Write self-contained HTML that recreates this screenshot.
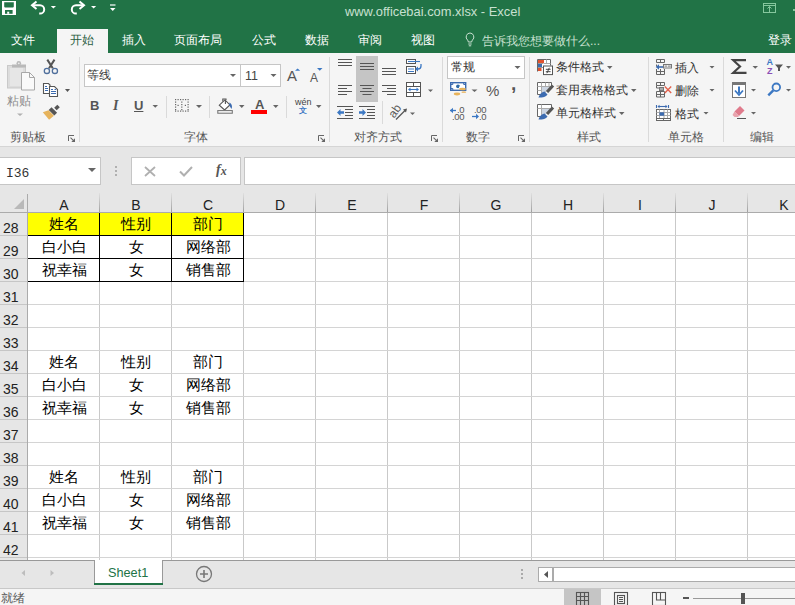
<!DOCTYPE html>
<html><head><meta charset="utf-8">
<style>
*{box-sizing:border-box;margin:0;padding:0}
html,body{width:795px;height:605px;overflow:hidden;background:#fff;font-family:"Liberation Sans",sans-serif;color:#444}
.a{position:absolute}
#title{left:0;top:0;width:795px;height:53px;background:#217346}
.tab{position:absolute;top:33px;font-size:12px;color:#fff;line-height:14px;white-space:nowrap;font-weight:300}
#ribbon{left:0;top:53px;width:795px;height:94px;background:#f5f5f5;border-bottom:1px solid #d5d5d5}
.sep{position:absolute;width:1px;background:#dadada}
.lbl{position:absolute;top:131px;font-size:12px;color:#555;line-height:13px;white-space:nowrap;font-weight:300}
.txt{position:absolute;font-size:13px;color:#333;line-height:14px;white-space:nowrap;font-weight:300}
.dd{position:absolute;width:0;height:0;border-left:3px solid transparent;border-right:3px solid transparent;border-top:3px solid #666}
#fbar{left:0;top:147px;width:795px;height:47px;background:#e6e6e6}
.box{position:absolute;background:#fff;border:1px solid #c6c6c6}
#grid{left:0;top:194px;width:795px;height:366px;background:#fff;overflow:hidden}
.colh{position:absolute;top:196px;height:18px;font-size:14px;color:#222;text-align:center;line-height:19px}
.rowh{position:absolute;left:0;width:28px;background:#e6e6e6;border-right:1px solid #9e9e9e;border-bottom:1px solid #c6c6c6;font-size:14px;color:#222;text-align:left;padding-left:5px}
.hl{position:absolute;left:28px;width:767px;height:1px;background:#d4d4d4}
.vl{position:absolute;top:18px;width:1px;height:350px;background:#d4d4d4}
.rown{position:absolute;left:3px;width:24px;height:23px;font-size:14px;color:#222;line-height:14px;padding-top:9px}
.cell{position:absolute;width:72px;text-align:center;font-size:15px;color:#000;line-height:16px;font-weight:300}
#tabs{left:0;top:560px;width:795px;height:28px;background:#e6e6e6;border-top:1px solid #999}
#status{left:0;top:588px;width:795px;height:17px;background:#f5f5f5}
</style></head><body>

<!-- TITLE BAR -->
<div id="title" class="a"></div>
<!-- save icon -->
<svg class="a" style="left:0;top:0" width="130" height="20" viewBox="0 0 130 20">
 <rect x="2" y="1" width="14" height="14" fill="#fff"/>
 <path d="M4.2 2.3h9.6v4.2a1 1 0 0 1-1 1h-7.6a1 1 0 0 1-1-1z" fill="#217346"/>
 <rect x="5" y="10" width="7.6" height="3.8" fill="#217346"/>
 <rect x="7.2" y="11.7" width="2" height="2.1" fill="#fff"/>
 <path d="M36.5 1.5L32 5.2l4.5 3.7" fill="none" stroke="#fff" stroke-width="2"/>
 <path d="M32.5 5.2H40a4.2 4.2 0 0 1 0 8.4h-0.8" fill="none" stroke="#fff" stroke-width="2"/>
 <path d="M50.8 6h5.2l-2.6 2.4z" fill="#fff"/>
 <path d="M79.5 1.5L84 5.2l-4.5 3.7" fill="none" stroke="#fff" stroke-width="2"/>
 <path d="M83.5 5.2H76a4.2 4.2 0 0 0 0 8.4h0.8" fill="none" stroke="#fff" stroke-width="2"/>
 <path d="M91 6h5.2l-2.6 2.4z" fill="#fff"/>
 <path d="M110 5h5.5" stroke="#fff" stroke-width="1.2"/>
 <path d="M110 8h5.5l-2.75 3z" fill="#fff"/>
</svg>
<div class="txt" style="left:345px;top:5px;font-size:12.9px;color:#c8e0d0;font-weight:normal">www.officebai.com.xlsx - Excel</div>
<svg class="a" style="left:755px;top:0" width="40" height="20" viewBox="755 0 40 20"><rect x="763.5" y="3.5" width="12" height="9" fill="none" stroke="#86c79e"/><path d="M764 5.5h11" stroke="#86c79e"/><path d="M769.5 6.5v6M767.5 8.5l2-2 2 2" fill="none" stroke="#86c79e"/><rect x="793" y="9" width="2" height="2" fill="#86c79e"/></svg>

<!-- TABS -->
<div class="a" style="left:57px;top:29px;width:51px;height:24px;background:#f5f5f5"></div>
<div class="tab" style="left:11px">文件</div>
<div class="tab" style="left:70px;color:#2b5e42">开始</div>
<div class="tab" style="left:122px">插入</div>
<div class="tab" style="left:174px">页面布局</div>
<div class="tab" style="left:252px">公式</div>
<div class="tab" style="left:305px">数据</div>
<div class="tab" style="left:358px">审阅</div>
<div class="tab" style="left:411px">视图</div>
<svg class="a" style="left:465px;top:32px" width="10" height="15" viewBox="0 0 10 15"><path d="M5 1a4 4 0 0 0-2.5 7c.5.6.8 1.2.8 2h3.4c0-.8.3-1.4.8-2A4 4 0 0 0 5 1z" fill="none" stroke="#c8e0d0" stroke-width="1"/><path d="M3.3 12h3.4M3.8 13.8h2.4" stroke="#c8e0d0"/></svg>
<div class="tab" style="left:482px;top:34px;font-size:12px;color:#c8e0d0">告诉我您想要做什么...</div>
<div class="tab" style="left:768px;font-weight:normal">登录</div>

<!-- RIBBON -->
<div id="ribbon" class="a"></div>
<div class="sep" style="left:79px;top:57px;height:85px"></div>
<div class="sep" style="left:329px;top:57px;height:85px"></div>
<div class="sep" style="left:442px;top:57px;height:85px"></div>
<div class="sep" style="left:529px;top:57px;height:85px"></div>
<div class="sep" style="left:648px;top:57px;height:85px"></div>
<div class="sep" style="left:723px;top:57px;height:85px"></div>

<!-- CLIPBOARD -->
<svg class="a" style="left:0;top:0" width="795" height="150" viewBox="0 0 795 150">
 <!-- paste -->
 <rect x="7.5" y="65.5" width="18" height="22.5" fill="#dcdcdc" stroke="#c9c9c9"/>
 <rect x="10" y="68" width="13" height="18" fill="#e6e6e6"/>
 <path d="M12 64.5h14v3h-14z" fill="#b9b9b9"/>
 <circle cx="18.8" cy="63.3" r="2.3" fill="#b9b9b9"/>
 <circle cx="18.8" cy="63.3" r="0.9" fill="#eee"/>
 <path d="M21.5 72.5h8l5 5v12.5h-13z" fill="#fafafa" stroke="#a8a8a8" stroke-width="1"/>
 <path d="M29.5 72.5v5h5" fill="none" stroke="#a8a8a8" stroke-width="1"/>
 <path d="M17 113.5h6l-3 2.5z" fill="#b0b0b0"/>
 <!-- cut -->
 <path d="M47.3 59.6L52.8 68.3M54.5 59.6L49 68.3" stroke="#555" stroke-width="2"/>
 <circle cx="46.9" cy="70.9" r="2.6" fill="none" stroke="#4f6f9c" stroke-width="1.3"/>
 <circle cx="54.9" cy="70.9" r="2.6" fill="none" stroke="#4f6f9c" stroke-width="1.3"/>
 <!-- copy -->
 <path d="M43.5 83.5h5l1.5 1.5v8.5h-6.5z" fill="#fff" stroke="#555" stroke-width="1.1"/>
 <path d="M45 86.5h2M45 88.5h3M45 90.5h3" stroke="#3c6bb0" stroke-width="1"/>
 <path d="M49.5 86.5h5l3 3v7h-8z" fill="#fff" stroke="#555" stroke-width="1.1"/>
 <path d="M51 89.5h2M54.5 89.5h1.5M51 91.5h5M51 93.5h5" stroke="#3c6bb0" stroke-width="1"/>
 <path d="M65 89h5l-2.5 3z" fill="#555"/>
 <!-- format painter -->
 <path d="M59.8 107.2L57.3 104.7 54.2 107.8 56.7 110.3z" fill="#555"/>
 <path d="M57.1 112.8L54.3 115.6 48.7 110 51.5 107.2z" fill="#555"/>
 <path d="M48.5 110.3L53.9 115.7 49.1 119.8 42.8 112.3z" fill="#e6b35c"/>
 <!-- launchers -->
 <path d="M68.5 141V135.5H74" fill="none" stroke="#666" stroke-width="1"/><path d="M70.5 137.7L73.5 140.7" stroke="#666" stroke-width="1.1"/><path d="M75 138.3V142H71.3z" fill="#666"/>
 <path d="M318.5 141V135.5H324" fill="none" stroke="#666" stroke-width="1"/><path d="M320.5 137.7L323.5 140.7" stroke="#666" stroke-width="1.1"/><path d="M325 138.3V142H321.3z" fill="#666"/>
 <path d="M431.5 141V135.5H437" fill="none" stroke="#666" stroke-width="1"/><path d="M433.5 137.7L436.5 140.7" stroke="#666" stroke-width="1.1"/><path d="M438 138.3V142H434.3z" fill="#666"/>
 <path d="M518.5 141V135.5H524" fill="none" stroke="#666" stroke-width="1"/><path d="M520.5 137.7L523.5 140.7" stroke="#666" stroke-width="1.1"/><path d="M525 138.3V142H521.3z" fill="#666"/>
</svg>
<div class="txt" style="left:7px;top:94px;font-size:12px;color:#8c8c8c;font-weight:normal">粘贴</div>
<div class="lbl" style="left:10px">剪贴板</div>
<!-- FONT GROUP -->
<div class="box" style="left:84px;top:64px;width:157px;height:23px;border-color:#c6c6c6"></div>
<div class="box" style="left:240px;top:64px;width:41px;height:23px;border-color:#c6c6c6"></div>
<div class="txt" style="left:87px;top:68px;font-size:12px;color:#333">等线</div>
<div class="txt" style="left:245px;top:69px;font-size:12.5px;color:#444">11</div>
<svg class="a" style="left:0;top:0" width="795" height="150" viewBox="0 0 795 150">
 <path d="M230 74h6l-3 3z" fill="#666"/>
 <path d="M270.5 74h6l-3 3z" fill="#666"/>
 <path d="M295 70.8h5.2l-2.6-2.4z" fill="#3c78c3"/>
 <path d="M317 68h5.5l-2.75 2.7z" fill="#3c78c3"/>
 <path d="M152.5 105h5.5l-2.75 2.8z" fill="#666"/>
 <!-- borders -->
 <g fill="#666">
  <rect x="175" y="99" width="1.2" height="1.2"/><rect x="177.5" y="99" width="1.2" height="1.2"/><rect x="180" y="99" width="1.2" height="1.2"/><rect x="182.5" y="99" width="1.2" height="1.2"/><rect x="185" y="99" width="1.2" height="1.2"/><rect x="187.5" y="99" width="1.2" height="1.2"/>
  <rect x="175" y="110.5" width="1.2" height="1.2"/><rect x="177.5" y="110.5" width="1.2" height="1.2"/><rect x="180" y="110.5" width="1.2" height="1.2"/><rect x="182.5" y="110.5" width="1.2" height="1.2"/><rect x="185" y="110.5" width="1.2" height="1.2"/><rect x="187.5" y="110.5" width="1.2" height="1.2"/>
  <rect x="175" y="101.5" width="1.2" height="1.2"/><rect x="175" y="104" width="1.2" height="1.2"/><rect x="175" y="106.5" width="1.2" height="1.2"/><rect x="175" y="109" width="1.2" height="1.2"/>
  <rect x="187.5" y="101.5" width="1.2" height="1.2"/><rect x="187.5" y="104" width="1.2" height="1.2"/><rect x="187.5" y="106.5" width="1.2" height="1.2"/><rect x="187.5" y="109" width="1.2" height="1.2"/>
  <rect x="181.2" y="101.5" width="1.2" height="1.2"/><rect x="181.2" y="104" width="1.2" height="1.2"/><rect x="181.2" y="106.5" width="1.2" height="1.2"/><rect x="181.2" y="109" width="1.2" height="1.2"/>
  <rect x="177.5" y="104.8" width="1.2" height="1.2"/><rect x="184.8" y="104.8" width="1.2" height="1.2"/>
 </g>
 <path d="M196 105h6l-3 3z" fill="#666"/>
 <!-- fill color -->
 <path d="M224.9 99.9L229.9 104.9 224.6 110 219.3 105.2z" fill="#fff" stroke="#555" stroke-width="1.1"/>
 <path d="M222.8 101.5v-2.5h3.2v1" fill="none" stroke="#555" stroke-width="1.1"/>
 <path d="M225.4 100.5v3.5" stroke="#555" stroke-width="1.1"/>
 <path d="M229.5 102.5c1.5 0.5 2.5 2.5 2.5 4.5l-0.5 2c-1-1.2-1.7-2.5-2.3-4z" fill="#3c6bb0"/>
 <rect x="217.8" y="110.6" width="14.5" height="2.6" fill="#fff" stroke="#777" stroke-width="1.1"/>
 <path d="M239 105h5.5l-2.75 3z" fill="#666"/>
 <!-- font color -->
 <rect x="251" y="110" width="16" height="4" fill="#f00"/>
 <path d="M273 105h5.5l-2.75 3z" fill="#666"/>
 <!-- wen -->
 <path d="M316 105h5.5l-2.75 3z" fill="#666"/>
</svg>
<div class="a" style="left:90px;top:99px;font-size:13px;font-weight:bold;color:#555;line-height:13px">B</div>
<div class="a" style="left:113px;top:99px;font-family:'Liberation Serif',serif;font-size:14px;font-style:italic;font-weight:bold;color:#555;line-height:13px">I</div>
<div class="a" style="left:134px;top:99px;font-size:13px;font-weight:bold;color:#555;line-height:13px;text-decoration:underline;text-underline-offset:1px">U</div>
<div class="a" style="left:287px;top:69px;font-size:15px;color:#555;line-height:14px">A</div>
<div class="a" style="left:310px;top:72px;font-size:12px;color:#555;line-height:12px">A</div>
<div class="a" style="left:255px;top:98px;font-size:13px;font-weight:bold;color:#555;line-height:14px">A</div>
<div class="a" style="left:295px;top:97.5px;font-size:9px;color:#444;line-height:9px">wén</div>
<div class="a" style="left:298.5px;top:105.5px;font-size:8px;color:#3c78c3;line-height:9px;font-weight:bold">文</div>
<div class="sep" style="left:166px;top:96px;height:22px"></div>
<div class="sep" style="left:209px;top:96px;height:22px"></div>
<div class="sep" style="left:286px;top:96px;height:22px"></div>
<div class="lbl" style="left:184px">字体</div>
<!-- ALIGNMENT -->
<div class="a" style="left:356px;top:56px;width:22px;height:46px;background:#c5c5c5"></div>
<svg class="a" style="left:0;top:0" width="795" height="150" viewBox="0 0 795 150">
 <g stroke="#555" stroke-width="1.1">
  <path d="M338 59.5h14M338 62.5h14M338 65.5h14"/>
  <path d="M360 63.5h14M360 66.5h14M360 69.5h14"/>
  <path d="M382 68.5h14M382 71.5h14M382 74.5h14"/>
  <path d="M338 85.5h14M338 88.5h9M338 91.5h14M338 94.5h9"/>
  <path d="M360 85.5h14M362.5 88.5h9M360 91.5h14M362.5 94.5h9"/>
  <path d="M382 85.5h14M387 88.5h9M382 91.5h14M387 94.5h9"/>
  <path d="M337 106.5h16M345 109.5h8M345 112.5h8M345 115.5h8M337 118.5h16"/>
  <path d="M359 106.5h16M367 109.5h8M367 112.5h8M367 115.5h8M359 118.5h16"/>
 </g>
 <path d="M337 112.5l3.5-3.5v2.3h3.5v2.4h-3.5v2.3z" fill="#3c78c3"/>
 <path d="M366 112.5l-3.5-3.5v2.3h-3.5v2.4h3.5v2.3z" fill="#3c78c3"/>
 <!-- wrap -->
 <rect x="406.5" y="59.5" width="9" height="4" fill="#fff" stroke="#555"/>
 <path d="M408 61.5h12" stroke="#3c78c3" stroke-width="1.1"/>
 <rect x="406.5" y="66.5" width="9" height="7" fill="#fff" stroke="#555"/>
 <path d="M408 69h6M408 71.5h6" stroke="#3c78c3" stroke-width="1.1"/>
 <path d="M421 64v2a3 3 0 0 1-3 3h-2" fill="none" stroke="#3c78c3" stroke-width="1.3"/>
 <path d="M415 69l3-2.5v5z" fill="#3c78c3"/>
 <!-- merge -->
 <rect x="406.5" y="82.5" width="14" height="14" fill="#fff" stroke="#555"/>
 <path d="M406.5 86.5h14M406.5 92.5h14M413.5 82.5v4M413.5 92.5v4" stroke="#555"/>
 <path d="M409 89.5h9" stroke="#3c78c3" stroke-width="1.1"/>
 <path d="M408 89.5l2.5-2v4zM419 89.5l-2.5-2v4z" fill="#3c78c3"/>
 <path d="M428 89.5h5l-2.5 2.5z" fill="#666"/>
 <!-- orientation -->
 <path d="M396 119.5L406 109.5" stroke="#555" stroke-width="1.2"/>
 <path d="M407 108.5l-1 4-3-3z" fill="#555"/>
 <path d="M410 112.5h5l-2.5 2.5z" fill="#666"/>
</svg>
<div class="a" style="left:388px;top:105px;font-size:12px;color:#555;line-height:12px;transform:rotate(-55deg);transform-origin:center">ab</div>
<div class="sep" style="left:382px;top:101px;height:23px"></div>
<div class="lbl" style="left:354px">对齐方式</div>
<!-- NUMBER -->
<div class="box" style="left:447px;top:56px;width:78px;height:23px"></div>
<div class="txt" style="left:451px;top:60px;font-size:12px;color:#333">常规</div>
<svg class="a" style="left:0;top:0" width="795" height="150" viewBox="0 0 795 150">
 <path d="M514.5 66h6l-3 3z" fill="#666"/>
 <rect x="450.7" y="82.7" width="15" height="7.6" fill="#fff" stroke="#3c6bb0" stroke-width="1.4"/>
 <path d="M451 84.5h1.8v-1.8M465.5 84.5h-1.8v-1.8M451 88.5h1.8v1.8" fill="none" stroke="#3c6bb0" stroke-width="1"/>
 <circle cx="458" cy="86.3" r="1.9" fill="#2f6aa6"/>
 <rect x="459" y="86.5" width="1.5" height="1.5" fill="#fff"/>
 <ellipse cx="462.5" cy="89" rx="3.4" ry="1.3" fill="#e8b35a"/>
 <ellipse cx="463.8" cy="92.2" rx="2.4" ry="0.9" fill="#ebc07a"/>
 <ellipse cx="457" cy="94" rx="3.2" ry="1.4" fill="#e8b35a"/>
 <path d="M471.5 89.5h6l-3 2.5z" fill="#666"/>
 <path d="M450 110.5h6" stroke="#3c78c3" stroke-width="1.3"/><path d="M450 110.5l3-2.8v5.6z" fill="#3c78c3"/>
 <path d="M472 116.5h6" stroke="#3c78c3" stroke-width="1.3"/><path d="M479 116.5l-3-2.8v5.6z" fill="#3c78c3"/>
</svg>
<div class="a" style="left:486px;top:83px;font-size:15px;color:#555;line-height:15px">%</div>
<div class="a" style="left:511px;top:75px;font-size:19px;font-weight:bold;color:#555;line-height:18px">,</div>
<div class="a" style="left:457px;top:104.5px;font-size:9.5px;color:#555;line-height:9px;letter-spacing:-0.3px">.0</div>
<div class="a" style="left:452px;top:112px;font-size:9.5px;color:#555;line-height:9px;letter-spacing:-0.3px">.00</div>
<div class="a" style="left:474px;top:104.5px;font-size:9.5px;color:#555;line-height:9px;letter-spacing:-0.3px">.00</div>
<div class="a" style="left:479px;top:112px;font-size:9.5px;color:#555;line-height:9px;letter-spacing:-0.3px">.0</div>
<div class="lbl" style="left:466px">数字</div>
<!-- STYLES -->
<svg class="a" style="left:0;top:0" width="795" height="150" viewBox="0 0 795 150">
 <!-- cond fmt -->
 <path d="M537.5 71.5v-12h13v6" fill="#fff" stroke="#666"/>
 <path d="M544 63.5h6.5M546.5 59.5v4" stroke="#aaa"/>
 <rect x="538" y="60" width="6" height="3" fill="#e0522f"/>
 <rect x="538" y="64" width="4" height="3" fill="#3c6bb0"/>
 <rect x="538" y="68" width="3.5" height="3" fill="#e0522f"/>
 <path d="M538 63.5h5.5M538 67.5h5" stroke="#999"/>
 <rect x="543.5" y="66" width="9" height="8.6" fill="#fff" stroke="#555"/>
 <path d="M545.8 69.3h4.8M545.8 71.7h4.8M549.3 67.8l-2.4 5.4" stroke="#444" stroke-width="1"/>
 <path d="M607 66h5.5l-2.75 3z" fill="#666"/>
 <!-- table fmt -->
 <path d="M551.5 85.5v-3h-14v12h8" fill="#fff" stroke="#666"/>
 <path d="M537.5 86.5h14M537.5 90.5h9M541.5 82.5v12M545.5 82.5v10M549 82.5v6" stroke="#aaa"/>
 <path d="M542 87h7.5l-6 7h-1.5z" fill="#cdd6e3"/>
 <path d="M553 85.5l-6 6.5" stroke="#555" stroke-width="3.2"/>
 <path d="M538.5 97.5c1-3 3-5.5 6-6l3 3c-1.5 2.5-4.5 3-9 3z" fill="#3c6bb0"/>
 <path d="M631 89h5.5l-2.75 3z" fill="#666"/>
 <!-- cell styles -->
 <path d="M551.5 107.5v-3h-14v12h8" fill="#fff" stroke="#666"/>
 <path d="M537.5 108.5h13M541.5 104.5v12" stroke="#aaa"/>
 <path d="M542 109h8.5l-6.5 7.5h-2z" fill="#cdd6e3"/>
 <path d="M553 107.5l-6 6.5" stroke="#555" stroke-width="3.2"/>
 <path d="M538.5 119.5c1-3 3-5.5 6-6l3 3c-1.5 2.5-4.5 3-9 3z" fill="#3c6bb0"/>
 <path d="M619 112h5.5l-2.75 3z" fill="#666"/>
</svg>
<div class="txt" style="left:556px;top:60px;font-size:12px;color:#333">条件格式</div>
<div class="txt" style="left:556px;top:83px;font-size:12px;color:#333">套用表格格式</div>
<div class="txt" style="left:556px;top:106px;font-size:12px;color:#333">单元格样式</div>
<div class="lbl" style="left:577px">样式</div>
<!-- CELLS + EDITING -->
<svg class="a" style="left:0;top:0" width="795" height="150" viewBox="0 0 795 150">
 <!-- insert -->
 <g fill="none" stroke="#666" stroke-width="1">
  <path d="M656.5 62.5v-3h8v3h-8M660.5 59.5v3"/>
  <path d="M656.5 69v5.5h8V69M656.5 71.5h8M660.5 69v5.5"/>
  <path d="M656.5 64.5v2"/>
 </g>
 <rect x="663.5" y="64.5" width="8" height="3.5" fill="#fff" stroke="#777"/>
 <rect x="664.5" y="65.3" width="2.8" height="2" fill="#aaa"/><rect x="668" y="65.3" width="2.8" height="2" fill="#aaa"/>
 <path d="M658 67h5" stroke="#3c6bb0" stroke-width="1.6"/><path d="M655.8 67l3.2-2.8v5.6z" fill="#3c6bb0"/>
 <path d="M709.5 66h5l-2.5 2.5z" fill="#666"/>
 <!-- delete -->
 <g fill="none" stroke="#666" stroke-width="1">
  <path d="M656.5 85.5v-3h8v3h-8M660.5 82.5v3"/>
  <path d="M656.5 91.5v5.5h8v-5.5h-8M656.5 94.5h8M660.5 91.5v5.5"/>
  <path d="M656.5 85.5v2.5h2.5"/>
 </g>
 <rect x="659.5" y="87.5" width="4" height="3" fill="#aaa" stroke="#777"/>
 <path d="M664.8 86.5l6.4 6.4M671.2 86.5l-6.4 6.4" stroke="#e2614c" stroke-width="1.4"/>
 <path d="M709.5 89h5l-2.5 2.5z" fill="#666"/>
 <!-- format -->
 <path d="M656.5 105v3M668.5 105v3" stroke="#3c6bb0" stroke-width="1.1"/>
 <path d="M658 106.5h9" stroke="#3c6bb0" stroke-width="1.1"/>
 <path d="M657.5 106.5l2-1.8v3.6zM667.5 106.5l-2-1.8v3.6z" fill="#3c6bb0"/>
 <rect x="656.5" y="109.5" width="14" height="11" fill="#fff" stroke="#666"/>
 <path d="M656.5 112.5h14M656.5 115.5h14M659.5 109.5v9M664 109.5v9M667.5 109.5v9" stroke="#aaa"/>
 <path d="M656.5 118.5h14M663.5 118.5v2" stroke="#666"/>
 <rect x="659.5" y="112.3" width="4.6" height="3.4" fill="#3c6bb0"/>
 <path d="M703.5 112h5l-2.5 2.5z" fill="#666"/>
 <!-- sigma -->
 <path d="M746 60.2H733.2L740 66.5 733.2 72.8H746.5" fill="none" stroke="#444" stroke-width="2.2" stroke-linejoin="miter"/>
 <path d="M752.5 66h5.5l-2.75 2.7z" fill="#666"/>
 <!-- sort -->
 <path d="M775 64.5h8l-3 3.5v3l-2 0v-3z" fill="#555"/>
 <path d="M786 66h5l-2.5 2.7z" fill="#666"/>
 <!-- fill -->
 <rect x="732.5" y="82.5" width="13" height="15" fill="#fff" stroke="#777"/>
 <rect x="732" y="82" width="14" height="3" fill="#777"/>
 <path d="M739 86.5v7" stroke="#3c78c3" stroke-width="2"/><path d="M735 90.5l4 4.5 4-4.5" fill="none" stroke="#3c78c3" stroke-width="1.8"/>
 <path d="M751 89h5l-2.5 2.5z" fill="#666"/>
 <!-- find -->
 <circle cx="776.3" cy="87.3" r="3.8" fill="none" stroke="#3c78c3" stroke-width="1.8"/>
 <path d="M773.3 90.3l-5 5" stroke="#3c78c3" stroke-width="2.4"/>
 <path d="M786 89h5l-2.5 2.5z" fill="#666"/>
 <!-- clear -->
 <path d="M740 106l4.5 4.5-5.5 5.5-4.5-4.5z" fill="#e07b8c"/>
 <path d="M734.5 111.5l4.5 4.5-1 1h-3.5l-2-2z" fill="#e9a4ae"/>
 <path d="M737 118.5h9" stroke="#555"/>
 <path d="M751 112h5l-2.5 2.5z" fill="#666"/>
</svg>
<div class="a" style="left:766.5px;top:58px;font-size:9px;font-weight:bold;color:#3c78c3;line-height:9px">A</div>
<div class="a" style="left:767px;top:67px;font-size:9px;font-weight:bold;color:#8a4fb5;line-height:9px">Z</div>
<div class="txt" style="left:675px;top:61px;font-size:12px;color:#333">插入</div>
<div class="txt" style="left:675px;top:84px;font-size:12px;color:#333">删除</div>
<div class="txt" style="left:675px;top:107px;font-size:12px;color:#333">格式</div>
<div class="lbl" style="left:668px">单元格</div>
<div class="lbl" style="left:750px">编辑</div>

<div id="fbar" class="a"></div>
<div class="box" style="left:-1px;top:157px;width:102px;height:28px"></div>
<div class="a" style="left:6px;top:167px;font-family:'Liberation Mono',monospace;font-size:13px;line-height:14px;color:#333">I36</div>
<svg class="a" style="left:88px;top:168px" width="8" height="4" viewBox="0 0 8 4"><path d="M0 0h8L4 4z" fill="#666"/></svg>
<div class="a" style="left:115px;top:166px;width:2px;height:2px;background:#b0b0b0"></div>
<div class="a" style="left:115px;top:170px;width:2px;height:2px;background:#b0b0b0"></div>
<div class="a" style="left:115px;top:174px;width:2px;height:2px;background:#b0b0b0"></div>
<div class="box" style="left:131px;top:157px;width:110px;height:28px"></div>
<svg class="a" style="left:144px;top:166px" width="12" height="11" viewBox="0 0 12 11"><path d="M1 1l10 9M11 1L1 10" stroke="#b0b0b0" stroke-width="1.8"/></svg>
<svg class="a" style="left:179px;top:166px" width="14" height="11" viewBox="0 0 14 11"><path d="M1 5.5l4 4L13 1" fill="none" stroke="#b0b0b0" stroke-width="2"/></svg>
<div class="a" style="left:216px;top:163px;font-family:'Liberation Serif',serif;font-style:italic;font-weight:bold;font-size:14px;line-height:14px;color:#555">f<span style="font-size:12px;position:relative;top:1px">x</span></div>
<div class="box" style="left:244px;top:157px;width:560px;height:28px"></div>
<!-- GRID -->
<div class="a" style="left:0;top:194px;width:795px;height:18px;background:#e6e6e6"></div>
<div class="a" style="left:0;top:212px;width:795px;height:1px;background:#ababab"></div>
<svg class="a" style="left:14px;top:199px" width="11" height="11" viewBox="0 0 11 11"><path d="M10 0V10H0z" fill="#b9b9b9"/></svg>
<div class="a" style="left:0;top:213px;width:27px;height:347px;background:#e6e6e6"></div>
<div class="a" style="left:27px;top:194px;width:1px;height:366px;background:#ababab"></div>
<div class="a" style="left:99px;top:193px;width:1px;height:19px;background:linear-gradient(#e0e0e0,#a0a0a0)"></div>
<div class="a" style="left:99px;top:213px;width:1px;height:347px;background:#c9c9c9"></div>
<div class="colh" style="left:28px;width:72px">A</div>
<div class="a" style="left:171px;top:193px;width:1px;height:19px;background:linear-gradient(#e0e0e0,#a0a0a0)"></div>
<div class="a" style="left:171px;top:213px;width:1px;height:347px;background:#c9c9c9"></div>
<div class="colh" style="left:100px;width:72px">B</div>
<div class="a" style="left:243px;top:193px;width:1px;height:19px;background:linear-gradient(#e0e0e0,#a0a0a0)"></div>
<div class="a" style="left:243px;top:213px;width:1px;height:347px;background:#c9c9c9"></div>
<div class="colh" style="left:172px;width:72px">C</div>
<div class="a" style="left:315px;top:193px;width:1px;height:19px;background:linear-gradient(#e0e0e0,#a0a0a0)"></div>
<div class="a" style="left:315px;top:213px;width:1px;height:347px;background:#c9c9c9"></div>
<div class="colh" style="left:244px;width:72px">D</div>
<div class="a" style="left:387px;top:193px;width:1px;height:19px;background:linear-gradient(#e0e0e0,#a0a0a0)"></div>
<div class="a" style="left:387px;top:213px;width:1px;height:347px;background:#c9c9c9"></div>
<div class="colh" style="left:316px;width:72px">E</div>
<div class="a" style="left:459px;top:193px;width:1px;height:19px;background:linear-gradient(#e0e0e0,#a0a0a0)"></div>
<div class="a" style="left:459px;top:213px;width:1px;height:347px;background:#c9c9c9"></div>
<div class="colh" style="left:388px;width:72px">F</div>
<div class="a" style="left:531px;top:193px;width:1px;height:19px;background:linear-gradient(#e0e0e0,#a0a0a0)"></div>
<div class="a" style="left:531px;top:213px;width:1px;height:347px;background:#c9c9c9"></div>
<div class="colh" style="left:460px;width:72px">G</div>
<div class="a" style="left:603px;top:193px;width:1px;height:19px;background:linear-gradient(#e0e0e0,#a0a0a0)"></div>
<div class="a" style="left:603px;top:213px;width:1px;height:347px;background:#c9c9c9"></div>
<div class="colh" style="left:532px;width:72px">H</div>
<div class="a" style="left:675px;top:193px;width:1px;height:19px;background:linear-gradient(#e0e0e0,#a0a0a0)"></div>
<div class="a" style="left:675px;top:213px;width:1px;height:347px;background:#c9c9c9"></div>
<div class="colh" style="left:604px;width:72px">I</div>
<div class="a" style="left:747px;top:193px;width:1px;height:19px;background:linear-gradient(#e0e0e0,#a0a0a0)"></div>
<div class="a" style="left:747px;top:213px;width:1px;height:347px;background:#c9c9c9"></div>
<div class="colh" style="left:676px;width:72px">J</div>
<div class="a" style="left:819px;top:193px;width:1px;height:19px;background:linear-gradient(#e0e0e0,#a0a0a0)"></div>
<div class="a" style="left:819px;top:213px;width:1px;height:347px;background:#c9c9c9"></div>
<div class="colh" style="left:748px;width:72px">K</div>
<div class="a" style="left:28px;top:235px;width:767px;height:1px;background:#d4d4d4"></div>
<div class="a" style="left:0;top:235px;width:27px;height:1px;background:#c6c6c6"></div>
<div class="a" style="left:28px;top:258px;width:767px;height:1px;background:#d4d4d4"></div>
<div class="a" style="left:0;top:258px;width:27px;height:1px;background:#c6c6c6"></div>
<div class="a" style="left:28px;top:281px;width:767px;height:1px;background:#d4d4d4"></div>
<div class="a" style="left:0;top:281px;width:27px;height:1px;background:#c6c6c6"></div>
<div class="a" style="left:28px;top:304px;width:767px;height:1px;background:#d4d4d4"></div>
<div class="a" style="left:0;top:304px;width:27px;height:1px;background:#c6c6c6"></div>
<div class="a" style="left:28px;top:327px;width:767px;height:1px;background:#d4d4d4"></div>
<div class="a" style="left:0;top:327px;width:27px;height:1px;background:#c6c6c6"></div>
<div class="a" style="left:28px;top:350px;width:767px;height:1px;background:#d4d4d4"></div>
<div class="a" style="left:0;top:350px;width:27px;height:1px;background:#c6c6c6"></div>
<div class="a" style="left:28px;top:373px;width:767px;height:1px;background:#d4d4d4"></div>
<div class="a" style="left:0;top:373px;width:27px;height:1px;background:#c6c6c6"></div>
<div class="a" style="left:28px;top:396px;width:767px;height:1px;background:#d4d4d4"></div>
<div class="a" style="left:0;top:396px;width:27px;height:1px;background:#c6c6c6"></div>
<div class="a" style="left:28px;top:419px;width:767px;height:1px;background:#d4d4d4"></div>
<div class="a" style="left:0;top:419px;width:27px;height:1px;background:#c6c6c6"></div>
<div class="a" style="left:28px;top:442px;width:767px;height:1px;background:#d4d4d4"></div>
<div class="a" style="left:0;top:442px;width:27px;height:1px;background:#c6c6c6"></div>
<div class="a" style="left:28px;top:465px;width:767px;height:1px;background:#d4d4d4"></div>
<div class="a" style="left:0;top:465px;width:27px;height:1px;background:#c6c6c6"></div>
<div class="a" style="left:28px;top:488px;width:767px;height:1px;background:#d4d4d4"></div>
<div class="a" style="left:0;top:488px;width:27px;height:1px;background:#c6c6c6"></div>
<div class="a" style="left:28px;top:511px;width:767px;height:1px;background:#d4d4d4"></div>
<div class="a" style="left:0;top:511px;width:27px;height:1px;background:#c6c6c6"></div>
<div class="a" style="left:28px;top:534px;width:767px;height:1px;background:#d4d4d4"></div>
<div class="a" style="left:0;top:534px;width:27px;height:1px;background:#c6c6c6"></div>
<div class="a" style="left:28px;top:557px;width:767px;height:1px;background:#d4d4d4"></div>
<div class="a" style="left:0;top:557px;width:27px;height:1px;background:#c6c6c6"></div>
<div class="rown" style="top:212px">28</div>
<div class="rown" style="top:235px">29</div>
<div class="rown" style="top:258px">30</div>
<div class="rown" style="top:281px">31</div>
<div class="rown" style="top:304px">32</div>
<div class="rown" style="top:327px">33</div>
<div class="rown" style="top:350px">34</div>
<div class="rown" style="top:373px">35</div>
<div class="rown" style="top:396px">36</div>
<div class="rown" style="top:419px">37</div>
<div class="rown" style="top:442px">38</div>
<div class="rown" style="top:465px">39</div>
<div class="rown" style="top:488px">40</div>
<div class="rown" style="top:511px">41</div>
<div class="rown" style="top:534px">42</div>
<!-- CELLS -->
<div class="a" style="left:28px;top:213px;width:215px;height:22px;background:#ffff00"></div>
<div class="a" style="left:28px;top:235px;width:216px;height:1px;background:#000"></div>
<div class="a" style="left:28px;top:258px;width:216px;height:1px;background:#000"></div>
<div class="a" style="left:28px;top:281px;width:216px;height:1px;background:#000"></div>
<div class="a" style="left:99px;top:213px;width:1px;height:69px;background:#000"></div>
<div class="a" style="left:171px;top:213px;width:1px;height:69px;background:#000"></div>
<div class="a" style="left:243px;top:213px;width:1px;height:69px;background:#000"></div>
<div class="cell" style="left:28px;top:216px">姓名</div>
<div class="cell" style="left:100px;top:216px">性别</div>
<div class="cell" style="left:172px;top:216px">部门</div>
<div class="cell" style="left:28px;top:239px">白小白</div>
<div class="cell" style="left:100px;top:239px">女</div>
<div class="cell" style="left:172px;top:239px">网络部</div>
<div class="cell" style="left:28px;top:262px">祝幸福</div>
<div class="cell" style="left:100px;top:262px">女</div>
<div class="cell" style="left:172px;top:262px">销售部</div>
<div class="cell" style="left:28px;top:354px">姓名</div>
<div class="cell" style="left:100px;top:354px">性别</div>
<div class="cell" style="left:172px;top:354px">部门</div>
<div class="cell" style="left:28px;top:377px">白小白</div>
<div class="cell" style="left:100px;top:377px">女</div>
<div class="cell" style="left:172px;top:377px">网络部</div>
<div class="cell" style="left:28px;top:400px">祝幸福</div>
<div class="cell" style="left:100px;top:400px">女</div>
<div class="cell" style="left:172px;top:400px">销售部</div>
<div class="cell" style="left:28px;top:469px">姓名</div>
<div class="cell" style="left:100px;top:469px">性别</div>
<div class="cell" style="left:172px;top:469px">部门</div>
<div class="cell" style="left:28px;top:492px">白小白</div>
<div class="cell" style="left:100px;top:492px">女</div>
<div class="cell" style="left:172px;top:492px">网络部</div>
<div class="cell" style="left:28px;top:515px">祝幸福</div>
<div class="cell" style="left:100px;top:515px">女</div>
<div class="cell" style="left:172px;top:515px">销售部</div>

<div id="tabs" class="a"></div>
<div class="a" style="left:94px;top:560px;width:69px;height:25px;background:#fff;border-left:1px solid #999;border-right:1px solid #999"></div>
<div class="a" style="left:94px;top:583px;width:69px;height:2px;background:#217346"></div>
<div class="a" style="left:108px;top:566px;font-size:12.7px;color:#217346;line-height:14px">Sheet1</div>
<svg class="a" style="left:0;top:555px" width="795" height="50" viewBox="0 555 795 50">
 <path d="M25 570v6l-3.5-3z" fill="#bdbdbd"/>
 <path d="M50.5 570v6l3.5-3z" fill="#bdbdbd"/>
 <circle cx="204" cy="574" r="7.5" fill="none" stroke="#777" stroke-width="1.3"/>
 <path d="M200 574h8M204 570v8" stroke="#777" stroke-width="1.6"/>
 <rect x="521" y="569" width="2" height="2" fill="#aaa"/><rect x="521" y="573" width="2" height="2" fill="#aaa"/><rect x="521" y="577" width="2" height="2" fill="#aaa"/>
 <rect x="538.5" y="567.5" width="14" height="14" fill="#fff" stroke="#ababab"/>
 <path d="M548 571v7l-4-3.5z" fill="#555"/>
 <rect x="553.5" y="567.5" width="250" height="14" fill="#fff" stroke="#ababab"/>
</svg>
<div id="status" class="a"></div>
<div class="a" style="left:0;top:588px;width:795px;height:1px;background:#c8c8c8"></div>
<div class="a" style="left:1px;top:592px;font-size:12px;color:#555;line-height:13px">就绪</div>
<div class="a" style="left:564px;top:589px;width:37px;height:16px;background:#c5c5c5"></div>
<svg class="a" style="left:0;top:585px" width="795" height="20" viewBox="0 585 795 20">
 <g fill="none" stroke="#555" stroke-width="1.1">
  <rect x="576.5" y="592.5" width="12" height="13"/>
  <path d="M580.5 592.5v13M584.5 592.5v13M576.5 596.5h12M576.5 600.5h12"/>
  <rect x="614.5" y="592.5" width="13" height="13"/>
  <rect x="617.5" y="595.5" width="7" height="8"/>
  <path d="M619 597.5h4M619 599.5h4M619 601.5h4"/>
  <rect x="652.5" y="592.5" width="13" height="13"/>
  <path d="M656.5 592.5v7.5h9M660.5 592.5v7.5"/>
 </g>
 <rect x="683" y="597" width="6" height="2" fill="#555"/>
 <path d="M693 598.5h102" stroke="#999"/>
 <rect x="741" y="593" width="4" height="11" fill="#555"/>
</svg>
</body></html>
